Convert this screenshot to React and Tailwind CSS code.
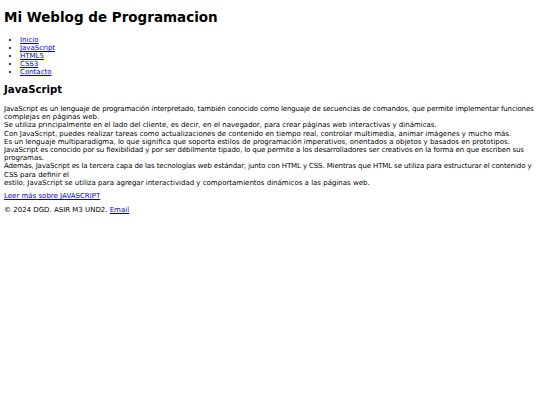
import React from 'react';

const links = ['Inicio', 'JavaScript', 'HTML5', 'CSS3', 'Contacto'];

const App = () => {
  return (
    <div className="w-[540px] h-[405px] bg-white px-[4px] text-black font-['DejaVu_Sans',Verdana,sans-serif] text-[7px] leading-[8.2px]">
      {/* Cabecera */}
      <header>
        <h1 className="text-[13.5px] leading-[16px] font-bold pt-[9px] mb-[11px]">Mi Weblog de Programacion</h1>
        <nav>
          <ul className="list-disc pl-[16px] leading-[8px]">
            {links.map((l) => (
              <li key={l}>
                <a href="#" className="text-[#0000ee] underline">{l}</a>
              </li>
            ))}
          </ul>
        </nav>
      </header>

      {/* Contenido principal */}
      <main>
        <h2 className="text-[10.2px] leading-[12px] font-bold mt-[8px] mb-[9px]">JavaScript</h2>
        <p className="whitespace-nowrap">
          <span className="tracking-[-0.13px]">JavaScript es un lenguaje de programación interpretado, también conocido como lenguaje de secuencias de comandos, que permite implementar funciones</span>
          <br />
          complejas en páginas web.
          <br />
          Se utiliza principalmente en el lado del cliente, es decir, en el navegador, para crear páginas web interactivas y dinámicas.
          <br />
          Con JavaScript, puedes realizar tareas como actualizaciones de contenido en tiempo real, controlar multimedia, animar imágenes y mucho más.
          <br />
          Es un lenguaje multiparadigma, lo que significa que soporta estilos de programación imperativos, orientados a objetos y basados en prototipos.
          <br />
          <span className="tracking-[-0.1px]">JavaScript es conocido por su flexibilidad y por ser débilmente tipado, lo que permite a los desarrolladores ser creativos en la forma en que escriben sus</span>
          <br />
          programas.
          <br />
          <span className="tracking-[-0.12px]">Además, JavaScript es la tercera capa de las tecnologías web estándar, junto con HTML y CSS. Mientras que HTML se utiliza para estructurar el contenido y</span>
          <br />
          CSS para definir el
          <br />
          estilo, JavaScript se utiliza para agregar interactividad y comportamientos dinámicos a las páginas web.
        </p>
        <p className="mt-[5px]">
          <a href="#" className="text-[#0000ee] underline">Leer más sobre JAVASCRIPT</a>
        </p>
      </main>

      {/* Pie */}
      <footer className="mt-[6px]">
        <p>
          © 2024 DGD. ASIR M3 UND2. <a href="#" className="text-[#0000ee] underline">Email</a>
        </p>
      </footer>
    </div>
  );
};

export default App;
